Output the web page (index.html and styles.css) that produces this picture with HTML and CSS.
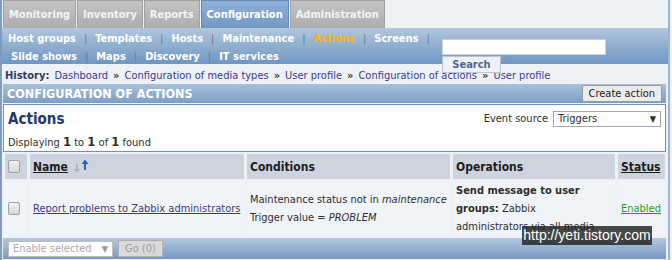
FILE: index.html
```html
<!DOCTYPE html>
<html lang="en">
<head>
    <meta charset="UTF-8">
    <title>Configuration of actions</title>
    <link rel="stylesheet" href="styles.css">
</head>
<body>
    <div class="page">
        <ul class="tabs">
            <li>Monitoring</li>
            <li>Inventory</li>
            <li>Reports</li>
            <li class="active">Configuration</li>
            <li>Administration</li>
        </ul>

        <div class="submenu">
            <div class="sublinks">
                <div class="subrow">
                    <a>Host groups</a><span class="sep">|</span>
                    <a>Templates</a><span class="sep">|</span>
                    <a>Hosts</a><span class="sep odd">|</span>
                    <a>Maintenance</a><span class="sep">|</span>
                    <a class="current">Actions</a><span class="sep">|</span>
                    <a>Screens</a><span class="sep">|</span>
                </div>
                <div class="subrow second">
                    <a>Slide shows</a><span class="sep">|</span>
                    <a>Maps</a><span class="sep">|</span>
                    <a>Discovery</a><span class="sep">|</span>
                    <a>IT services</a>
                </div>
            </div>
            <div class="search">
                <input type="text">
                <button>Search</button>
            </div>
        </div>

        <div class="history">
            <b>History:</b>
            <a>Dashboard</a><span class="raquo">&raquo;</span>
            <a>Configuration of media types</a><span class="raquo">&raquo;</span>
            <a>User profile</a><span class="raquo">&raquo;</span>
            <a>Configuration of actions</a><span class="raquo">&raquo;</span>
            <a>User profile</a>
        </div>

        <div class="header">
            <span>CONFIGURATION OF ACTIONS</span>
            <button class="btn">Create action</button>
        </div>

        <div class="box">
            <div class="box-top">
                <h2>Actions</h2>
                <label class="source">Event source
                    <span class="select">Triggers <i>&#9660;</i></span>
                </label>
            </div>
            <div class="counter">Displaying <b>1</b> to <b>1</b> of <b>1</b> found</div>
        </div>

        <table class="list">
            <tr class="head">
                <th class="chk"><span class="box-chk"></span></th>
                <th class="name"><a>Name</a>
                    <svg class="sort" width="18" height="14" viewBox="0 0 18 14">
                        <path d="M4 5v5H1.5L5 13.5 8.5 10H6V5z" fill="#b3b3b3"/>
                        <path d="M12 11V5H9.5L13 0.5 16.5 5H14v6z" fill="#2f62b4"/>
                    </svg>
                </th>
                <th class="cond">Conditions</th>
                <th class="ops">Operations</th>
                <th class="status"><a>Status</a></th>
            </tr>
            <tr class="row">
                <td class="chk"><span class="box-chk"></span></td>
                <td><a class="link">Report problems to Zabbix administrators</a></td>
                <td>Maintenance status not in <i>maintenance</i><br>Trigger value = <i>PROBLEM</i></td>
                <td><b>Send message to user groups:</b> Zabbix<br>administrators via all media</td>
                <td><a class="enabled">Enabled</a></td>
            </tr>
        </table>

        <div class="footer">
            <span class="select disabled">Enable selected <i>&#9660;</i></span>
            <button class="go">Go (0)</button>
        </div>

        <div class="watermark">http://yeti.tistory.com</div>
    </div>
</body>
</html>
```

FILE: styles.css
```css
body{
    margin: 0;
    background: #eef1f5;
    font-family: "DejaVu Sans Condensed", "DejaVu Sans", sans-serif;
    font-size: 11px;
    color: #2e2e2e;
}
.page{
    position: relative;
    width: 666px;
    height: 260px;
    border-left: 2px solid #7d9cc4;
    border-right: 2px solid #9fb6d3;
    overflow: hidden;
}
a{
    cursor: pointer;
}

/* main tabs */
.tabs{
    display: flex;
    margin: 0;
    padding: 0 0 0 1px;
    list-style: none;
    gap: 1px;
    height: 28px;
}
.tabs li{
    display: flex;
    align-items: center;
    padding: 0 5px;
    background: linear-gradient(#c4c4c4, #adadad);
    border: 1px solid #a0a0a0;
    border-bottom: none;
    color: #f4f4f4;
    font-weight: bold;
}
.tabs li.active{
    background: linear-gradient(#90b0d4, #7298c4);
    border-color: #6088b8;
    color: #fff;
}

/* sub menu */
.submenu{
    display: flex;
    height: 36px;
    background: linear-gradient(#b2c6dc, #6f96c1);
}
.sublinks{
    width: 434px;
    padding: 2px 0 0 6px;
}
.subrow{
    display: flex;
    align-items: center;
    height: 17px;
}
.subrow.second{
    padding-left: 3px;
    margin-top: 1px;
}
.subrow a{
    color: #fff;
    font-weight: bold;
}
.subrow a.current{
    color: #f9b700;
}
.sep{
    color: #5d7ea6;
    padding: 0 8px;
}
.sep.odd{
    color: #8a5e86;
}
.search{
    position: relative;
    z-index: 1;
    display: flex;
    flex-direction: column;
    align-items: flex-start;
    padding-top: 11px;
    margin-bottom: -9px;
}
.search input{
    width: 162px;
    height: 14px;
    margin: 0;
    padding: 0;
    border: 1px solid #c5d2e2;
    background: #fff;
}
.search button{
    margin: 1px 0 0;
    width: 59px;
    height: 17px;
    padding: 0;
    border: 1px solid #b6c4d6;
    background: #eef1f5;
    color: #4a6a96;
    font-family: inherit;
    font-size: 11px;
    font-weight: bold;
}

/* history */
.history{
    display: flex;
    align-items: center;
    height: 18px;
    padding: 2px 0 0 3px;
    gap: 5px;
    color: #3b3b90;
}
.history b{
    color: #2c3c68;
}
.raquo{
    font-weight: bold;
    color: #3a3a3a;
}

/* page header */
.header{
    display: flex;
    align-items: center;
    justify-content: space-between;
    height: 19px;
    margin: 0 2px 0 1px;
    padding: 0 4px 0 4px;
    background: linear-gradient(#a9c1da, #7c9ec6);
    color: #fff;
    font-size: 12.5px;
    font-weight: bold;
}
.btn{
    height: 17px;
    padding: 0 6px;
    background: #ececec;
    border: 1px solid #9a9a9a;
    border-radius: 2px;
    color: #222;
    font-family: inherit;
    font-size: 11px;
    font-weight: normal;
}

/* box with title */
.box{
    margin: 1px 2px 0 1px;
    height: 46px;
    padding: 0 4px;
    background: #fff;
    border: 1px solid #6e90bc;
}
.box-top{
    display: flex;
    align-items: center;
    justify-content: space-between;
    height: 27px;
}
.box h2{
    margin: 0;
    font-size: 15px;
    color: #1f3868;
}
.source{
    display: flex;
    align-items: center;
    gap: 5px;
}
.select{
    display: flex;
    justify-content: space-between;
    align-items: center;
    width: 98px;
    height: 14px;
    padding: 0 4px;
    background: #fff;
    border: 1px solid #a5a5a5;
}
.select i{
    font-style: normal;
    font-size: 9px;
}
.counter{
    padding-top: 2px;
}
.counter b{
    font-size: 13px;
}

/* table */
.list{
    width: 666px;
    margin-left: 0;
    border-spacing: 3px 2px;
}
.list th, .list td{
    padding: 0 3px;
    text-align: left;
}
.list .head th{
    height: 25px;
    background: #ccd5df;
    font-size: 12px;
    color: #1d1d1d;
}
.list .head a{
    text-decoration: underline;
}
.list .row td{
    height: 55px;
    background: #f0f4f8;
    line-height: 18px;
    vertical-align: middle;
}
.list .chk{
    width: 16px;
}
.list .name{
    width: 208px;
}
.list .cond{
    width: 197px;
}
.list .ops{
    width: 156px;
}
.sort{
    vertical-align: -2px;
}
.box-chk{
    display: block;
    width: 10px;
    height: 11px;
    border: 1px solid #a0a0a0;
    border-radius: 2px;
    background: linear-gradient(#f2f2f2, #d6d6d6);
}
.link{
    color: #3a3a8c;
    text-decoration: underline;
}
.enabled{
    color: #1f9a1f;
    text-decoration: underline;
}

/* footer */
.footer{
    display: flex;
    align-items: center;
    gap: 5px;
    height: 21px;
    margin: 0 2px 0 1px;
    padding-left: 5px;
    background: linear-gradient(#b4c8de, #7699c3);
}
.select.disabled{
    width: 95px;
    color: #a9a9a9;
    border-color: #bdbdbd;
}
.select.disabled i{
    color: #999;
}
.go{
    height: 17px;
    padding: 0 6px;
    background: #dadada;
    border: 1px solid #b0b0b0;
    color: #9a9a9a;
    font-family: inherit;
    font-size: 11px;
}

.watermark{
    position: absolute;
    left: 520px;
    top: 226px;
    width: 130px;
    height: 19px;
    background: rgba(40, 40, 40, 0.85);
    color: #fff;
    font-family: "Liberation Sans", sans-serif;
    font-size: 14px;
    line-height: 19px;
    text-align: center;
}
```
